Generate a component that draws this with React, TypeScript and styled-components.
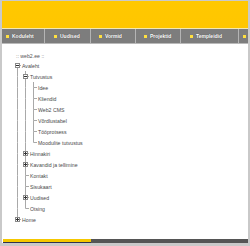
import React from 'react';
import styled, { createGlobalStyle } from 'styled-components';

type TreeNode = { label: string; open?: boolean; children?: TreeNode[] };

const tree: TreeNode[] = [
  {
    label: 'Avaleht',
    open: true,
    children: [
      {
        label: 'Tutvustus',
        open: true,
        children: [
          { label: 'Idee' },
          { label: 'Kliendid' },
          { label: 'Web2 CMS' },
          { label: 'Võrdlustabel' },
          { label: 'Tööprotsess' },
          { label: 'Moodulite tutvustus' },
        ],
      },
      { label: 'Hinnakiri', children: [{ label: 'Hinnad' }] },
      { label: 'Kavandid ja tellimine', children: [{ label: 'Kavandid' }] },
      { label: 'Kontakt' },
      { label: 'Sisukaart' },
      { label: 'Uudised', children: [{ label: 'Arhiiv' }] },
      { label: 'Otsing' },
    ],
  },
  { label: 'Home', children: [{ label: 'About' }] },
];

// the last item runs off the right edge, only its bullet shows
const menu = [
  { label: 'Koduleht', width: 43, pad: 4 },
  { label: 'Uudised', width: 46, pad: 9 },
  { label: 'Vormid', width: 45, pad: 8 },
  { label: 'Projektid', width: 45, pad: 8 },
  { label: 'Templeidid', width: 58, pad: 9 },
  { label: '', width: 20, pad: 4 },
];

const GlobalStyle = createGlobalStyle`
  html, body {
    margin: 0;
    padding: 0;
    background: #c9c9c9;
  }
`;

const Page = styled.div`
  width: 246px;
  margin: 1px 0 0 2px;
  background: #fff;
  font-family: 'Liberation Sans', Arial, sans-serif;
`;

const Header = styled.div`
  height: 27px;
  background: linear-gradient(#ffc800, #ffc600);
  border-bottom: 1px solid #f4e7b0;
`;

const Nav = styled.div`
  display: flex;
  height: 14px;
  background: #7d7d7d;
  border-bottom: 1px solid #b9b9b9;
  overflow: hidden;
`;

const NavItem = styled.div<{ $w: number; $pad: number }>`
  flex: none;
  box-sizing: border-box;
  width: ${(p) => p.$w}px;
  padding-left: ${(p) => p.$pad}px;
  display: flex;
  align-items: center;
  gap: 3px;
  border-right: 1px solid #b4b4b4;
  color: #fff;
  font-size: 5px;
  font-weight: bold;
  white-space: nowrap;
  text-shadow: 0 0 1px #404040;

  &:last-child {
    border-right: none;
  }
`;

const Bullet = styled.span`
  width: 3px;
  height: 3px;
  background: #ffe040;
  flex: none;
`;

const Content = styled.div`
  height: 195px;
  padding: 9px 0 0 11px;
  box-sizing: border-box;
`;

const Title = styled.div`
  height: 7px;
  line-height: 7px;
  padding-left: 3px;
  font-size: 5.2px;
  color: #555;
`;

const Row = styled.div`
  display: flex;
  align-items: center;
  height: 11px;
`;

const Label = styled.span`
  padding-left: 1px;
  font-size: 5.2px;
  color: #4a4a4a;
  white-space: nowrap;
`;

const Footer = styled.div`
  display: flex;
  align-items: flex-start;
  height: 4px;
`;

const YellowBar = styled.div`
  width: 88px;
  margin-left: 1px;
  height: 3px;
  background: #f5c800;
  border-bottom: 1px solid #2f3350;
`;

const GrayBar = styled.div`
  flex: 1;
  height: 4px;
  background: #555;
`;

type JointKind = 'blank' | 'pass' | 'tee' | 'corner';

const LINE = '#a9a9a9';

const Joint = ({ kind, box, first }: { kind: JointKind; box?: 'plus' | 'minus'; first?: boolean }) => (
  <svg width="8" height="11" style={{ flex: 'none', display: 'block' }}>
    {kind !== 'blank' && !first && <line x1="4.5" y1="0" x2="4.5" y2="5.5" stroke={LINE} />}
    {(kind === 'pass' || kind === 'tee') && <line x1="4.5" y1="5.5" x2="4.5" y2="11" stroke={LINE} />}
    {(kind === 'tee' || kind === 'corner') && <line x1="4.5" y1="5.5" x2="8" y2="5.5" stroke={LINE} />}
    {box && (
      <>
        <rect x="2.5" y="3.5" width="4" height="4" fill="#fff" stroke="#8a8a8a" />
        <line x1="3" y1="5.5" x2="6" y2="5.5" stroke="#333" />
        {box === 'plus' && <line x1="4.5" y1="4" x2="4.5" y2="7" stroke="#333" />}
      </>
    )}
  </svg>
);

const Branch = ({ nodes, lines }: { nodes: TreeNode[]; lines: boolean[] }) => (
  <>
    {nodes.map((node, i) => {
      const last = i === nodes.length - 1;
      const hasKids = !!node.children?.length;
      return (
        <React.Fragment key={node.label}>
          <Row>
            {lines.map((l, j) => (
              <Joint key={j} kind={l ? 'pass' : 'blank'} />
            ))}
            <Joint
              kind={last ? 'corner' : 'tee'}
              box={hasKids ? (node.open ? 'minus' : 'plus') : undefined}
              first={lines.length === 0 && i === 0}
            />
            <Label>{node.label}</Label>
          </Row>
          {hasKids && node.open && <Branch nodes={node.children!} lines={[...lines, !last]} />}
        </React.Fragment>
      );
    })}
  </>
);

const App = () => (
  <>
    <GlobalStyle />
    <Page>
      <Header />
      <Nav>
        {menu.map((m, i) => (
          <NavItem key={i} $w={m.width} $pad={m.pad}>
            <Bullet />
            {m.label}
          </NavItem>
        ))}
      </Nav>
      <Content>
        <Title>:: web2.ee ::</Title>
        <Branch nodes={tree} lines={[]} />
      </Content>
      <Footer>
        <YellowBar />
        <GrayBar />
      </Footer>
    </Page>
  </>
);

export default App;
